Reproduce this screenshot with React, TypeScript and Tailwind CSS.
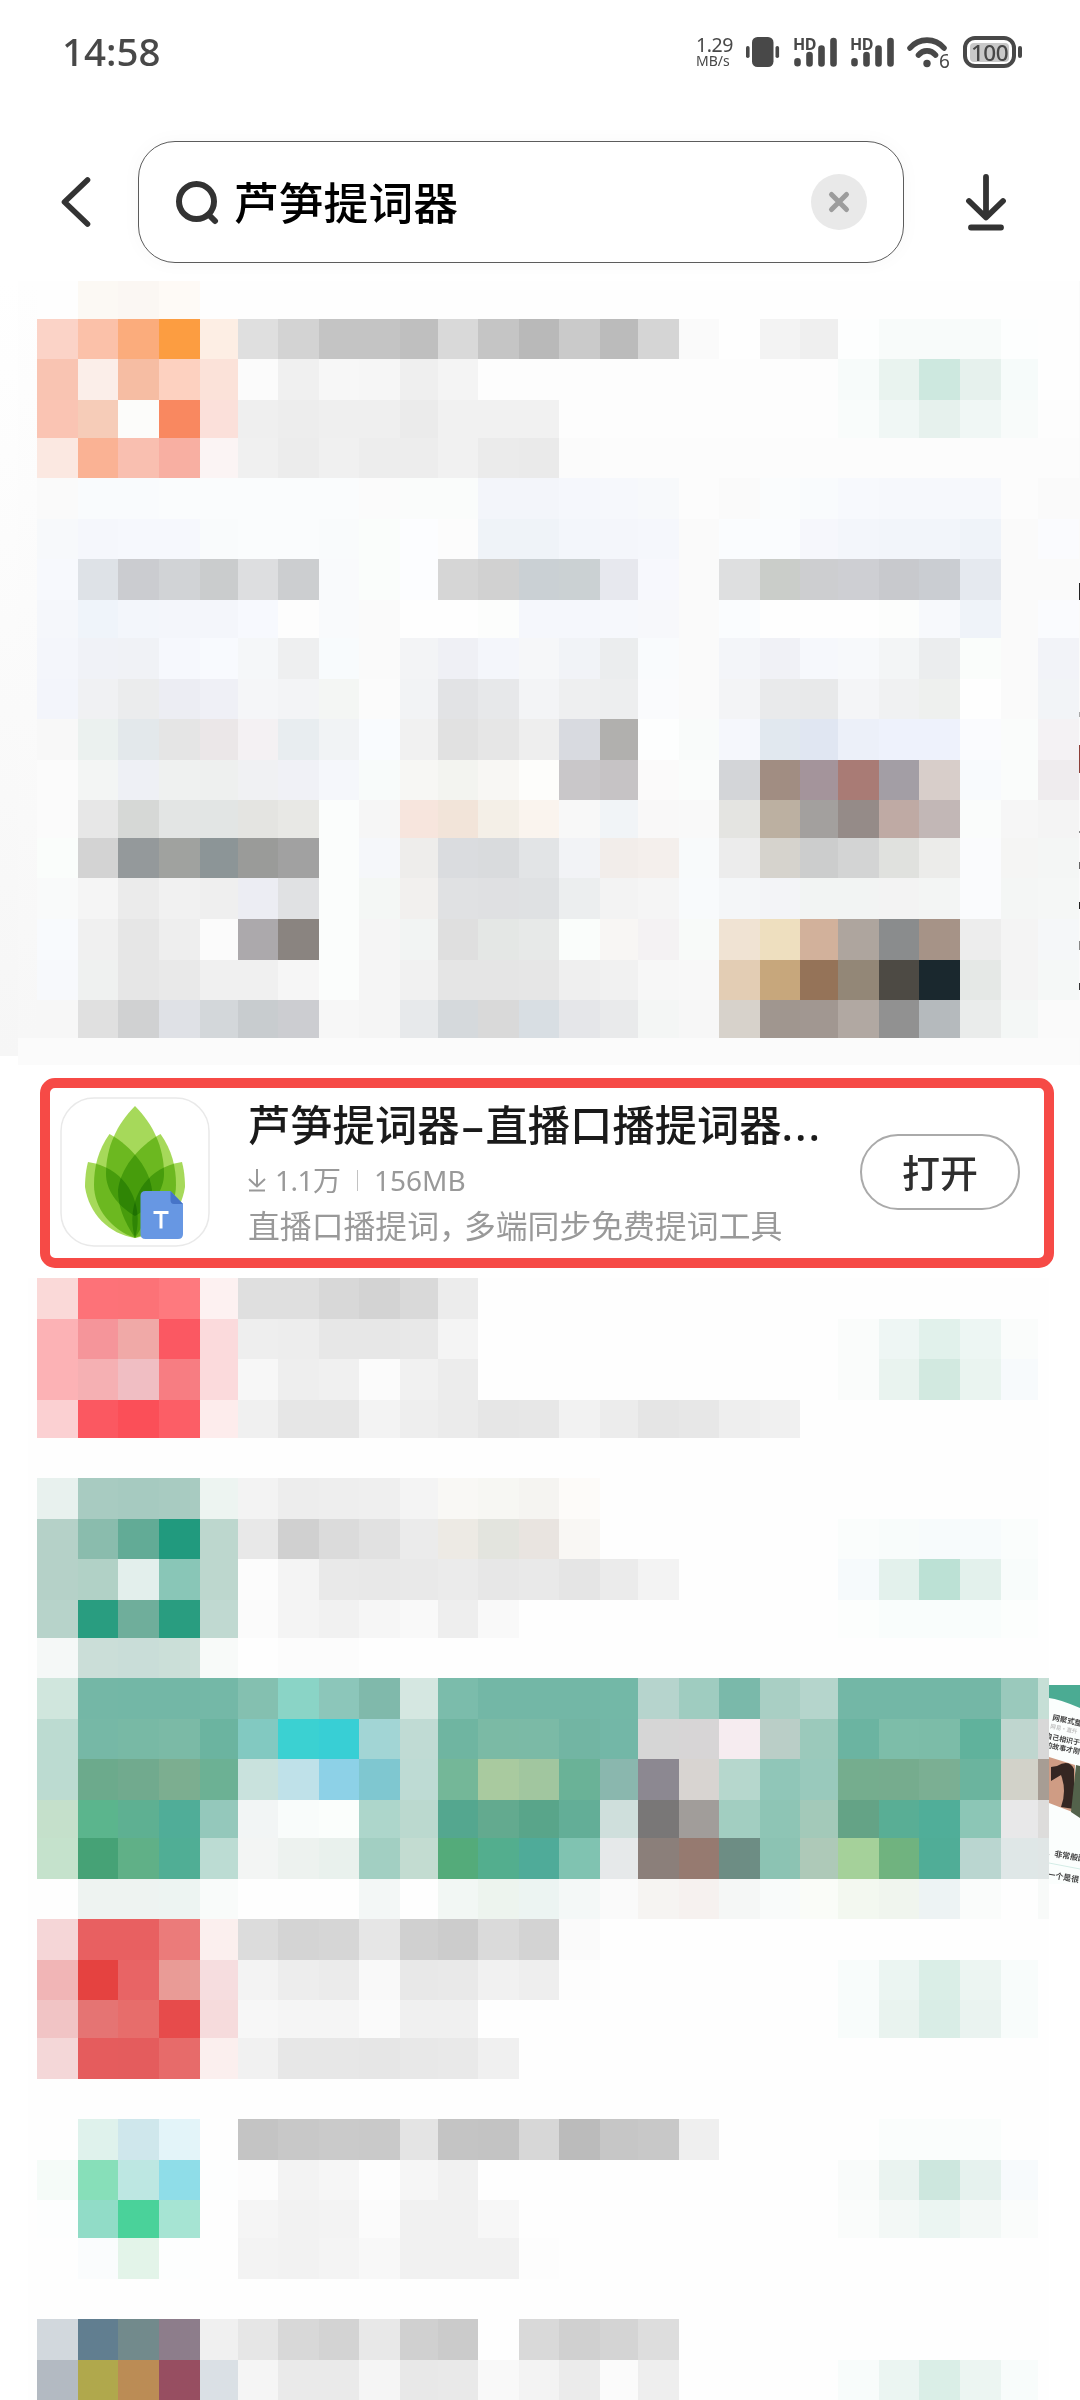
const LATIN = "font-['Noto_Sans','Noto_Sans_CJK_SC',sans-serif]";

const UPPER: string[] = [
  '- fcf9f4 fbf7f3 fefaf6',
  'fbd3c7 fbc1a9 fbac7c fc9d41 fdeee4 dfdfdf d3d3d3 c4c4c4 c4c4c4 bfbfbf d9d9d9 c5c5c5 b9b9b9 cacaca bbbbbb d5d5d5 fafafa fefefe f3f3f3 efefef fdfefe f8fbfa f8fbfa f8fbfa fdfefe fefefe',
  'f9c4b2 fbeee9 f6bda3 fdd1c0 fbe2d9 fbfbfb f0f0f0 f7f7f7 f6f6f6 efefef f4f4f4 fdfdfd fdfdfd fdfdfd fdfdfd fdfdfd fdfdfd fdfdfd fdfdfd fdfdfd f7fbfa e9f3ef cde8df e6f1ed f6fbfa fefefe',
  'fac4b3 f6ccb8 fcfcfa f98860 fbe0da efefef ededed efefef efefef ebebeb f1f1f1 f1f1f1 f1f1f1 fdfdfd fdfdfd fdfdfd fdfdfd fdfdfd fdfdfd fdfdfd f9fcfb f0f7f5 e6f1ed f0f7f5 f8fbfa fdfdfd',
  'fbe8e1 fab294 f9bfb0 f8afa2 fbf4f4 f0f0f0 ececec f0f0f0 ededed ededed f1f1f1 ebebeb eaeaea fbfbfb fcfcfc fcfcfc fcfcfc fcfcfc fcfcfc fcfcfc fcfcfc fcfcfc fcfcfc fcfcfc fcfcfc fcfcfc',
  'fafafa f9fbfd f9fbfd fafcfd fafcfd fafcfd fafcfd fafcfd fbfbfb fafcfb fafcfb f3f5fa f3f5fa f5f7fc f6f8fc f7f9fb fcfcfc fafafa fafcfd f9fbfd f7f9fd f6f8fc f6f8fc f6f8fc fcfcfc fafafa',
  'f7f9fb f5f7fc f6f8fd f6f8fd f9fbfc fafcfd fafcfd f9fbfc fafdfb fcfdff fcfcfc eff3f8 eff3f8 f3f6fb f4f6fb f5f7fc fafafa fafcfe fafcfe f6f7fc f3f6fb f2f5fa f2f5fa eff3f9 fafafa fafbfe',
  'f7f9fd dee2e7 cbccd0 d1d3d6 cacccd dddee0 ccced0 f9fafc fafdfb fcfdff d6d6d6 d1d1d1 cad0d4 cbd1d3 e7e8ee f7f8fd fafafa dedfe0 cacdc9 cdced0 cecfd3 c8c9cd cacdd2 e5e9ef fafafa fafafa',
  'f5f7fb eff4fa f3f6fb f4f6fb f4f6fb f7f9fe fdfdfd f9fafc fafafa fefefe fefefe fcfdfc f5f7fc f5f7fc f6f8fc f7f8fb fafafa fafcfe fefefe fefefe fefefe fcfdfc f7f9fc eff3f9 fafafa fafbfe',
  'f4f6fb f0f2f7 f0f2f6 f6f8fd f8fafe f5f7f9 eeeff0 f8fbfd fafafa f3f4f6 eff0f5 f4f6fb f6f7f9 f1f3f7 ebedee f9fbfd fafafa f3f5f9 f0f1f6 f6f8fc f7f9fb f3f5f6 ebedee fafdfb fafafa f2f3f8',
  'f3f5fb f0f1f3 ebeced ecedf3 eff0f6 f5f6f8 f3f4f6 f4f6f4 fbfbfb f2f3f5 e2e3e5 e7e8ea f3f4f6 eeeff0 edeeef fafbfd fafafa f3f4f6 e9eaeb e8e9ea f4f5f7 f0f1f2 eef0ee fefefe fafafa f2f4f7',
  'f8f8f8 ebf1ef e3e8eb e5e5e5 ebe7e8 f4f1f3 e8edf0 f1f3f5 f9fbfe f1f1f1 e1e1e1 e6e6e6 eeeeee d8dae0 b1b0ae fdfefe f9fbfa f5f7fc e1e8ef e0e6f2 ecf0f9 eef2fc eef2fc fafbfe fafcfb f4f2f4',
  'fbfbfb f3f5f4 eef0f5 eff1f0 eef0ef f0f1f3 f0f1f6 f5f7fb f8fbfa f7f7f4 f3f4f0 f8f7f4 fdfdfb c9c7c9 c6c3c5 fbfafa fafcfb d3d5d8 a18d82 a4949b a97b75 a39ea5 d8ceca f8fafd fafcfb efecee',
  'fbfbfb e7e7e7 d6d8d6 e3e5e4 e2e5e4 e4e4e1 e8e8e5 fbfdfc f6f6f6 f7e5dd f2e4d9 f4efe7 faf4ee f8f8f8 f1f4f7 f9f8f8 f9f9f9 e4e4e1 bcb0a1 a3a09e 958b88 bfaaa4 c2b7b6 fafcfb f6f6f6 f4f4f4',
  'fafdfb d3d3d3 94999b a0a29f 8c9597 9a9b99 a1a1a1 fbfdfc f5f7fa eeedeb dadcdf d9dbdd e2e4e6 f2f3f6 f2edea f4efec f8fafb ececec d6d3cd cccdcd d3d4d4 e0e1de ececea fafbfd f5f5f4 f4f6f5',
  'f9fafa f5f5f5 ebebeb f1f1f1 efefef ecedf3 e0e1e3 fbfdfc f4f7f5 f2f0ee e0e1e3 dfe0e2 dfe1e3 eceeef f3f3f3 f5f5f5 f8fafc f4f6f8 f3f4f7 f2f4f3 f2f4f3 f3f3f3 f3f5f4 fafbfd f4f6f5 f5f7f6',
  'f8fafd f0f0f0 e6e6e6 eeeeee fbfbfb aca9ac 8a8480 fbfdfc f5f5f5 f2f4f3 dfdfdf e4e7e5 e7e9e8 fafdfb f8f6f4 f4f2f3 f8faf9 f0e3d3 eedfbf d2b19b aea59e 8a8c8d a69387 ededed f4f4f4 f5f7f9',
  'f7f9fc eff1f0 e6e6e6 e9e9e9 f0f0f0 f0f0f0 f6f6f6 fbfdfc f5f5f5 f1f1f1 e5e5e5 e5e5e5 e6e6e6 efefef f1f1f1 f7f7f7 f8f8f8 e3cdb4 c7a77c 957358 938777 4d4a44 1a282e e5e8e6 f4f4f4 f5f8f7',
  'f7f7f7 e0e0e0 d0d1d2 dfe1e6 d3d7da c8cccf cccdd1 f7f7f7 f5f5f5 e7e9eb d5d9dc d9d9d9 d8dee3 e5e6e9 e9eaeb f4f6f5 f7f7f7 d7d2cb a0968f a19791 b1a8a2 919191 b5babd eaeceb f4f7f6 fafafa',
];

const LOWER: string[] = [
  'fad9d8 fd7278 fc7277 fe797e fdf1f1 dfdfdf dfdfdf d8d8d8 d3d3d3 d9d9d9 ececec',
  'fcb2b5 f5959a f0a9a7 fb5862 fbdadc eeeeee ededed e7e7e7 e7e7e7 e8e8e8 f4f4f4 - - - - - - - - - fafcfb eef6f4 e1f1eb edf6f3 fafcfb',
  'fcb2b5 f5b0b3 f0bec3 f77d82 fbdadc f7f7f7 eeeeee f0f0f0 fbfbfb f1f1f1 ececec - - - - - - - - - fafcfb e9f3ef d2e9e0 eaf4f0 f7fafc',
  'fbd0d2 fb5861 fb4f58 fc5e66 fdecec f0f0f0 e6e6e6 e6e6e6 f3f3f3 eeeeee ebebeb e6e6e6 e7e7e7 f2f2f2 ececec e5e5e5 e7e7e7 eeeeee f0f0f0',
  '-',
  'e8f1ee a8cbc1 a6cac0 a8cbc1 edf4f1 f3f3f3 ededed eeeeee efefef f4f4f4 f9f8f5 f7f7f3 f5f4f1 fdfbf9',
  'b5d1c8 8abcad 62ab96 219a7e bdd7ce e8e8e8 d0d0d0 dbdbdb e1e1e1 ebebeb edeae4 e3e4de e9e4e0 f9f7f4 - - - - - - fafdfc f8fcfb f7fbfc f7fbfc fafdfc',
  'b5d1c8 b1d1c6 e3efec 89c6b7 bdd7ce fcfcfc f4f4f4 e9e9e9 e8e8e8 e9e9e9 ebebeb e7e7e7 e9e9e9 e5e5e5 ebebeb f3f3f3 - - - - f6fafc e3f1ec bce1d5 e3f1ec f8fcfb',
  'b7d3ca 299d80 6fae9b 299d80 c0d9d1 fbfbfb f4f4f4 f1f1f1 f6f6f6 f9f9f9 eeeeee f9f9f9 - - - - - - - - fcfefd f9fdfc f9fdfc f9fdfc fcfefd',
  'f5f8f7 cbded8 c9ddd8 cbdfd8 f8faf9 - fcfcfc fcfcfc',
  'd0e6dd 74b7a6 73b7a6 73b7a6 74b8a7 84c0b0 8ad4c6 8cc6ba 80b9ab d5e7e1 7bbcab 73b7a6 73b7a6 73b7a6 73b8a7 b6d4cd 9fccc0 7ab9aa a9cfc4 b5d5cc 73b7a6 73b7a6 73b7a6 74b7a6 9ac9bc c6dfd6',
  'bcdbd1 76b8a6 78b9a5 7bbaa6 6bb4a0 82c9c1 3bd1d2 38cfd5 a2d5d5 c0dbd4 6fb5a1 7bbaa5 7bbaa6 72b5a3 73b7a7 d6d6d6 d7d5d6 f6ecf0 bacec7 9bc9bb 6bb4a1 7dbda9 7cbca8 60b29c bfd6cf d8d8d8',
  'bcdbd1 6caa8c 71aa8e 7cae90 6cb194 c9e2dd bfe1e9 8dd1e7 7fc7d0 bedbd4 74b798 a9ca9f a1c69f 6ab297 8ab7ae 8c8891 d8d4d1 b6d7cd 90c6b8 99c9bc 75ad8e 76ac8e 7baf93 6bb49e d2d2c9 a79d94',
  'c5e0cb 5bb58d 5eb092 50ad98 94c8bb f2f5f5 f9fcfb fbfefc add6cb bbd9cf 54a78f 63aa8f 59a58a 63ae97 cfdfdc 797777 a19d9a a2cec1 8ec5b5 a3c9b9 64a386 59ae95 50ae99 8cc6b6 e8e8e9 dddcdb',
  'c5e2cc 46a276 60b087 50ae95 bcdcd3 f3f5f4 edf2ef e9f1ed a2cfc2 c3dcd1 54ab7a 53ae8e 4fab99 80c3b1 e6e9ea 8b7f7a 967a70 6d8d84 8cc3b3 aec9b8 a5d19a 70b37f 50ad97 bad6d0 dfe7e7 e0e6e6',
  '- eef3f1 eef3f1 edf4f2 f9fbfa - - - f3f7f6 - f2f7f4 edf4ee ecf4f2 f4f8f7 fafafa f6f4f2 f6f1ef f5f7f6 f9fbfa fafcf8 f3f8f0 f0f5ee edf3f4 fafcfb - f8faf9',
  'f5d6d7 e86061 e86061 eb7b7a fbefee dcdcdc d4d4d4 d6d6d6 e6e6e6 d0d0d0 cccccc dadada d3d3d3 fafafa',
  'f1b5b6 e54240 e86465 e99b96 f6dddf f3f3f3 ededed ebebeb f9f9f9 e8e8e8 e9e9e9 f1f1f1 eeeeee fdfdfd - - - - - - f8fcfb ebf5f2 daeee7 ecf5f2 f8fcfb',
  'f1c4c5 e57473 e76d6b e74b4b f6dbdc f7f7f7 f5f5f5 f5f5f5 fafafa f0f0f0 f0f0f0 - - - - - - - - - f8fcfb e9f3ef d9ede6 eaf3f0 f8fcfb',
  'f4d7d8 e55c5d e45c5d e76b6a fbefee f1f1f1 e7e7e7 e7e7e7 e6e6e6 e8e8e8 e9e9e9 f0f0f0',
  '-',
  '- dff2ec cfe7ec e3f4f9 - c4c4c4 c8c8c8 cacaca c9c9c9 e4e4e4 c4c4c4 c3c3c3 d7d7d7 bbbbbb c6c6c6 c8c8c8 efefef - - - - fafdfc fafdfc fafdfc',
  'f5fbf8 87dfb9 bde7e2 8fdde8 fdfefe fcfcfc f3f3f3 f6f6f6 fdfdfd f6f6f6 f1f1f1 - - - - - - - - - f9fbfa eaf3f0 cde7de e6f2ee f7fafc',
  'fdfefe 91dcc7 4ad29a a6e4d3 - f5f5f5 f2f2f2 f3f3f3 fbfbfb f1f1f1 f1f1f1 f7f7f7 - - - - - - - - fafcfb f3f8f6 ebf5f2 f3f8f6 fafcfb',
  '- fafcfd e3f4e9 fdfefe - f3f3f3 f2f2f2 f4f4f4 f8f8f8 f1f1f1 f1f1f1 f1f1f1 fdfdfd',
  '-',
  'd2d8dd 617e90 728a8c 8d7d8b f0f0f0 e6e6e6 d8d8d8 d3d3d3 e8e8e8 d0d0d0 cbcbcb - d9d9d9 d0d0d0 d4d4d4 dddddd',
  'b3bac2 b0a84c bb8c55 974e61 dae0e5 f5f5f5 eaeaea eaeaea f5f5f5 e8e8e8 e9e9e9 f9f9f9 f3f3f3 ebebeb fbfbfb eeeeee - - - - f8fcfb ebf5f2 daeee7 ecf5f2 f8fcfb',
];

const COLUMNS = 26;

/** Pixelated tiles that hide the other search results. */
function Tiles({ rows }: { rows: string[] }) {
  return (
    <>
      {rows.flatMap((row, r) => {
        const colors = row.split(' ');
        return Array.from({ length: COLUMNS }, (_, c) => {
          const color = colors[c] && colors[c] !== '-' ? `#${colors[c]}` : '#fefefe';
          return <div key={`${r}-${c}`} style={{ backgroundColor: color }} />;
        });
      })}
    </>
  );
}

function Signal() {
  return (
    <div className="relative h-8 w-[43px]">
      <span className="absolute left-[-1px] top-[-1px] text-[16px] leading-[18px] font-bold tracking-[-0.6px]">HD</span>
      <svg className="h-8 w-[43px]" viewBox="0 0 43 32" stroke="#484848" strokeWidth="6.6" strokeLinecap="round">
        <path d="M3.5 25.2v2M15.5 19v8.5M27.5 12.500v15M39.500 5v22.500" />
      </svg>
    </div>
  );
}

function StatusBar() {
  return (
    <header className="flex h-[100px] items-start justify-between pl-[62px] pr-[58px] text-[#484848]">
      <div className="mt-[31px] text-[38.500px] leading-[40px] font-medium">14:58</div>
      <div className="mt-[36px] flex h-8 items-center">
        <div className="mr-[13px] flex w-[37px] flex-col">
          <span className="text-[19.5px] leading-[18px] tracking-[-0.4px]">1.29</span>
          <span className="text-[14px] leading-[14px]">MB/s</span>
        </div>
        <svg className="mr-[14px] h-8 w-[34px]" viewBox="0 0 34 32" fill="#484848">
          <rect x="6" y="1" width="21.500" height="30" rx="5.500" />
          <rect x="0" y="10" width="3.600" height="12" rx="1.800" />
          <rect x="29.500" y="10" width="3.600" height="12" rx="1.800" />
        </svg>
        <Signal />
        <div className="w-[14px]" />
        <Signal />
        <div className="relative ml-[13px] mr-[13px] h-8 w-[43px]">
          <svg className="h-8 w-[43px]" viewBox="0 0 43 32" fill="none" stroke="#484848" strokeLinecap="round">
            <path d="M3 12C12 1.500 28 1.500 37 12" strokeWidth="5.600" />
            <path d="M11.500 19C16 13.500 24 13.500 28.500 19" strokeWidth="5.600" />
            <circle cx="20" cy="27.500" r="3.700" fill="#484848" stroke="none" />
          </svg>
          <span className="absolute left-[32px] top-[14px] text-[19px] leading-[22px]">6</span>
        </div>
        <div className="flex items-center">
          <div className="flex h-8 w-[53px] items-center justify-center rounded-[12px] border-4 border-[#484848]">
            <div className="flex h-[19px] w-[39px] items-center justify-center rounded-[4px] bg-[#c9c9c9] text-[22.5px] leading-[19px] font-medium tracking-[-0.5px]">100</div>
          </div>
          <div className="ml-[2px] h-[12px] w-[4px] rounded-full bg-[#484848]" />
        </div>
      </div>
    </header>
  );
}

function SearchBar() {
  return (
    <div className="flex h-[181px] items-start pt-[41px]">
      <svg className="ml-[58px] mt-[33px] h-14 w-9" viewBox="0 0 36 56" fill="none" stroke="#333" strokeWidth="5.600" strokeLinecap="round" strokeLinejoin="round">
        <path d="M29.500 6L6.500 28L29.500 50" />
      </svg>
      <div className="ml-[44px] flex h-[122px] w-[766px] items-center rounded-[37px] border-[1.5px] border-[#5c5c5c] bg-white pl-[36px] pr-[36px] shadow-[0_0_20px_rgba(0,0,0,0.03)]">
        <svg className="h-[46px] w-[46px]" viewBox="0 0 46 46" fill="none" stroke="#333" strokeWidth="6" strokeLinecap="round">
          <circle cx="21.500" cy="22.500" r="17.500" />
          <path d="M34 36l6 6" />
        </svg>
        <span className="ml-[13px] mt-[2px] flex-1 text-[44.800px] leading-[60px] font-medium text-black">芦笋提词器</span>
        <span className="flex h-14 w-14 items-center justify-center rounded-full bg-[#e9e9e9]">
          <svg className="h-6 w-6" viewBox="0 0 24 24" stroke="#9c9c9c" strokeWidth="5" strokeLinecap="round">
            <path d="M4.500 4.500l15 15M19.500 4.500L4.500 19.500" />
          </svg>
        </span>
      </div>
      <svg className="ml-[60px] mt-[29px] h-16 w-11" viewBox="0 0 44 64" fill="none" stroke="#333" strokeWidth="5.800" strokeLinecap="round" strokeLinejoin="round">
        <path d="M22 7v39M5 31l17 16.500L39 31M7 57.500h30" />
      </svg>
    </div>
  );
}

function LeafIcon() {
  return (
    <svg className="h-[150px] w-[150px]" viewBox="0 0 150 150">
      <rect x="1" y="1" width="148" height="148" rx="33" fill="#fff" stroke="#e9e9e9" strokeWidth="1.500" />
      <g fill="#a6d95a" className="isolate">
        <path className="mix-blend-multiply" d="M75 9C93 27 104 50 104 77C104 92 94 108 75 119C56 108 46 92 46 77C46 50 57 27 75 9Z" />
        <path className="mix-blend-multiply" d="M49.500 37C38 53 34 70 34 88C34 112 52 133 75 141C86 124 92 110 92 93C90 73 73 50 49.500 37Z" />
        <path className="mix-blend-multiply" d="M100.500 37C112 53 116 70 116 88C116 112 98 133 75 141C64 124 58 110 58 93C60 73 77 50 100.500 37Z" />
        <path className="mix-blend-multiply" d="M28 65C25 76 25 88 25 90C29 117 49 137 75 141C84 112 71 72 28 65Z" />
        <path className="mix-blend-multiply" d="M122 65C125 76 125 88 125 90C121 117 101 137 75 141C66 112 79 72 122 65Z" />
      </g>
      <path d="M85.500 94H110.500L123 107V137Q123 142 118 142H85.500Q80.500 142 80.500 137V99Q80.500 94 85.500 94Z" fill="#6797e3" />
      <path d="M110.500 94L123 107H114Q110.500 107 110.500 103Z" fill="#4674c8" />
      <path d="M95 115.500H107M101 115.500V130" stroke="#fff" strokeWidth="3" strokeLinecap="square" />
    </svg>
  );
}

function AppResult() {
  return (
    <section className="h-[213px] pl-10 pr-[26px] pt-[13px]">
      <div className="flex h-[190px] items-start rounded-[15px] border-[10px] border-[#f64a46] bg-white pl-[10px] pt-[9px]">
        <LeafIcon />
        <div className="ml-[38px] flex w-[612px] flex-col whitespace-nowrap">
          <h2 className="mt-[-2px] flex h-[60px] items-center text-[42.300px] leading-[60px] font-medium text-[#1a1a1a]">
            芦笋提词器
            <span className="inline-flex w-[26px] justify-center">
              <span className="inline-block scale-x-[1.8]">-</span>
            </span>
            直播口播提词器<span className="tracking-[2px]">...</span>
          </h2>
          <div className="mt-[5px] flex h-[40px] items-center text-[28px] leading-[40px] text-[#999]">
            <svg className="h-6 w-[18px]" viewBox="0 0 18 24" fill="none" stroke="#999" strokeWidth="2">
              <path d="M9 1v17M1 11l8 7.500L17 11M1 22.500h16" />
            </svg>
            <span className="ml-[9px] tracking-[-0.5px]">1.1万</span>
            <span className="ml-[16px] h-[21px] w-[1.500px] bg-[#c2c2c2]" />
            <span className="ml-[16px]">156MB</span>
          </div>
          <p className="mt-[3px] text-[31.850px] leading-[46px] text-[#999]">
            直播口播提词<span className="tracking-[-7px]">，</span>多端同步免费提词工具
          </p>
        </div>
        <button className="mt-[37px] flex h-[76px] w-[160px] items-center justify-center rounded-full border-2 border-[#aaa] text-[38px] leading-[50px] font-medium text-[#2e2e2e]">
          打开
        </button>
      </div>
    </section>
  );
}

/** Sliver of the screenshot carousel that runs off the right edge. */
function PreviewSliver() {
  return (
    <svg className="mt-[407px] h-[199px] w-[31px]" viewBox="0 0 31 199">
      <rect width="31" height="199" fill="#fbfefd" />
      <path d="M0 0H31V23Q10 14 0 13Z" fill="#4bab93" />
      <g fontFamily="Noto Sans CJK SC" fontWeight="700" fill="#444">
        <text x="3" y="35" fontSize="7.500" transform="rotate(12 3 35)">网聚式整多</text>
        <text x="1" y="43" fontSize="5.500" fill="#c4c4c4" transform="rotate(12 1 43)">网易·直升</text>
        <text x="-4" y="53" fontSize="7" transform="rotate(12 -4 53)">自己相识于</text>
        <text x="-4" y="62" fontSize="7" transform="rotate(12 -4 62)">的故事才刚</text>
        <text x="-3" y="170" fontSize="8" transform="rotate(10 -3 170)">，非常般配</text>
        <text x="-2" y="192" fontSize="8" transform="rotate(10 -2 192)">一个是很</text>
      </g>
      <path d="M0 72L26 80V128L0 118Z" fill="#cf9c84" />
      <path d="M8 81Q20 74 25 84V124L12 122Q18 106 12 90L2 96V82Z" fill="#342622" />
      <path d="M27 80L31 81V133L22 127Z" fill="#53624b" />
      <path d="M0 178L31 184" stroke="#d3ece6" strokeWidth="1" />
    </svg>
  );
}

const EDGE_MARKS = [
  'mt-[302px] h-[17px] bg-[#222]',
  'mt-[112px] h-[5px] bg-[#aaa]',
  'mt-[28px] h-[28px] bg-[#8d3f38]',
  'mt-[58px] h-[2px] bg-[#888]',
  'mt-[29px] h-[7px] bg-[#666]',
  'mt-[33px] h-[7px] bg-[#222]',
  'mt-[32px] h-[9px] bg-[#888]',
  'mt-[33px] h-[7px] bg-[#333]',
];

export default function App() {
  return (
    <main className={`flex h-[2400px] w-[1080px] flex-col overflow-hidden bg-white ${LATIN}`}>
      <StatusBar />
      <SearchBar />
      <div className="flex h-[784px]">
        <div className="h-[775px] w-[18px] bg-linear-to-b from-white to-[#f6f6f6]" />
        <div className="flex w-[1061px] flex-col">
          <div className="flex h-[757px]">
            <div className="w-[19px] bg-linear-to-b from-[#fefefe] to-[#f7f7f7]" />
            <div className="grid grid-cols-[41px_40px_41px_41px_38px_40px_41px_40px_41px_38px_40px_41px_40px_41px_38px_41px_40px_41px_40px_38px_41px_40px_41px_41px_37px_41px] grid-rows-[38px_40px_41px_38px_40px_41px_40px_41px_38px_41px_40px_41px_40px_38px_40px_41px_41px_40px_38px]">
              <Tiles rows={UPPER} />
            </div>
          </div>
          <div className="flex-1 bg-[#fbfbfb]" />
        </div>
        <div className="flex w-px flex-col bg-[#fafafa]">
          {EDGE_MARKS.map((mark) => (
            <span key={mark} className={`w-px ${mark}`} />
          ))}
        </div>
      </div>
      <AppResult />
      <div className="flex h-[1122px]">
        <div className="ml-[28px] w-[9px] bg-[#fefefe]" />
        <div className="grid grid-cols-[41px_40px_41px_41px_38px_40px_41px_40px_41px_38px_40px_41px_40px_41px_38px_41px_40px_41px_40px_38px_41px_40px_41px_41px_37px_11px] grid-rows-[41px_40px_41px_38px_40px_41px_40px_41px_38px_40px_41px_40px_41px_38px_41px_40px_41px_40px_38px_41px_40px_41px_40px_38px_41px_40px_41px_40px]">
          <Tiles rows={LOWER} />
        </div>
        <PreviewSliver />
      </div>
    </main>
  );
}
